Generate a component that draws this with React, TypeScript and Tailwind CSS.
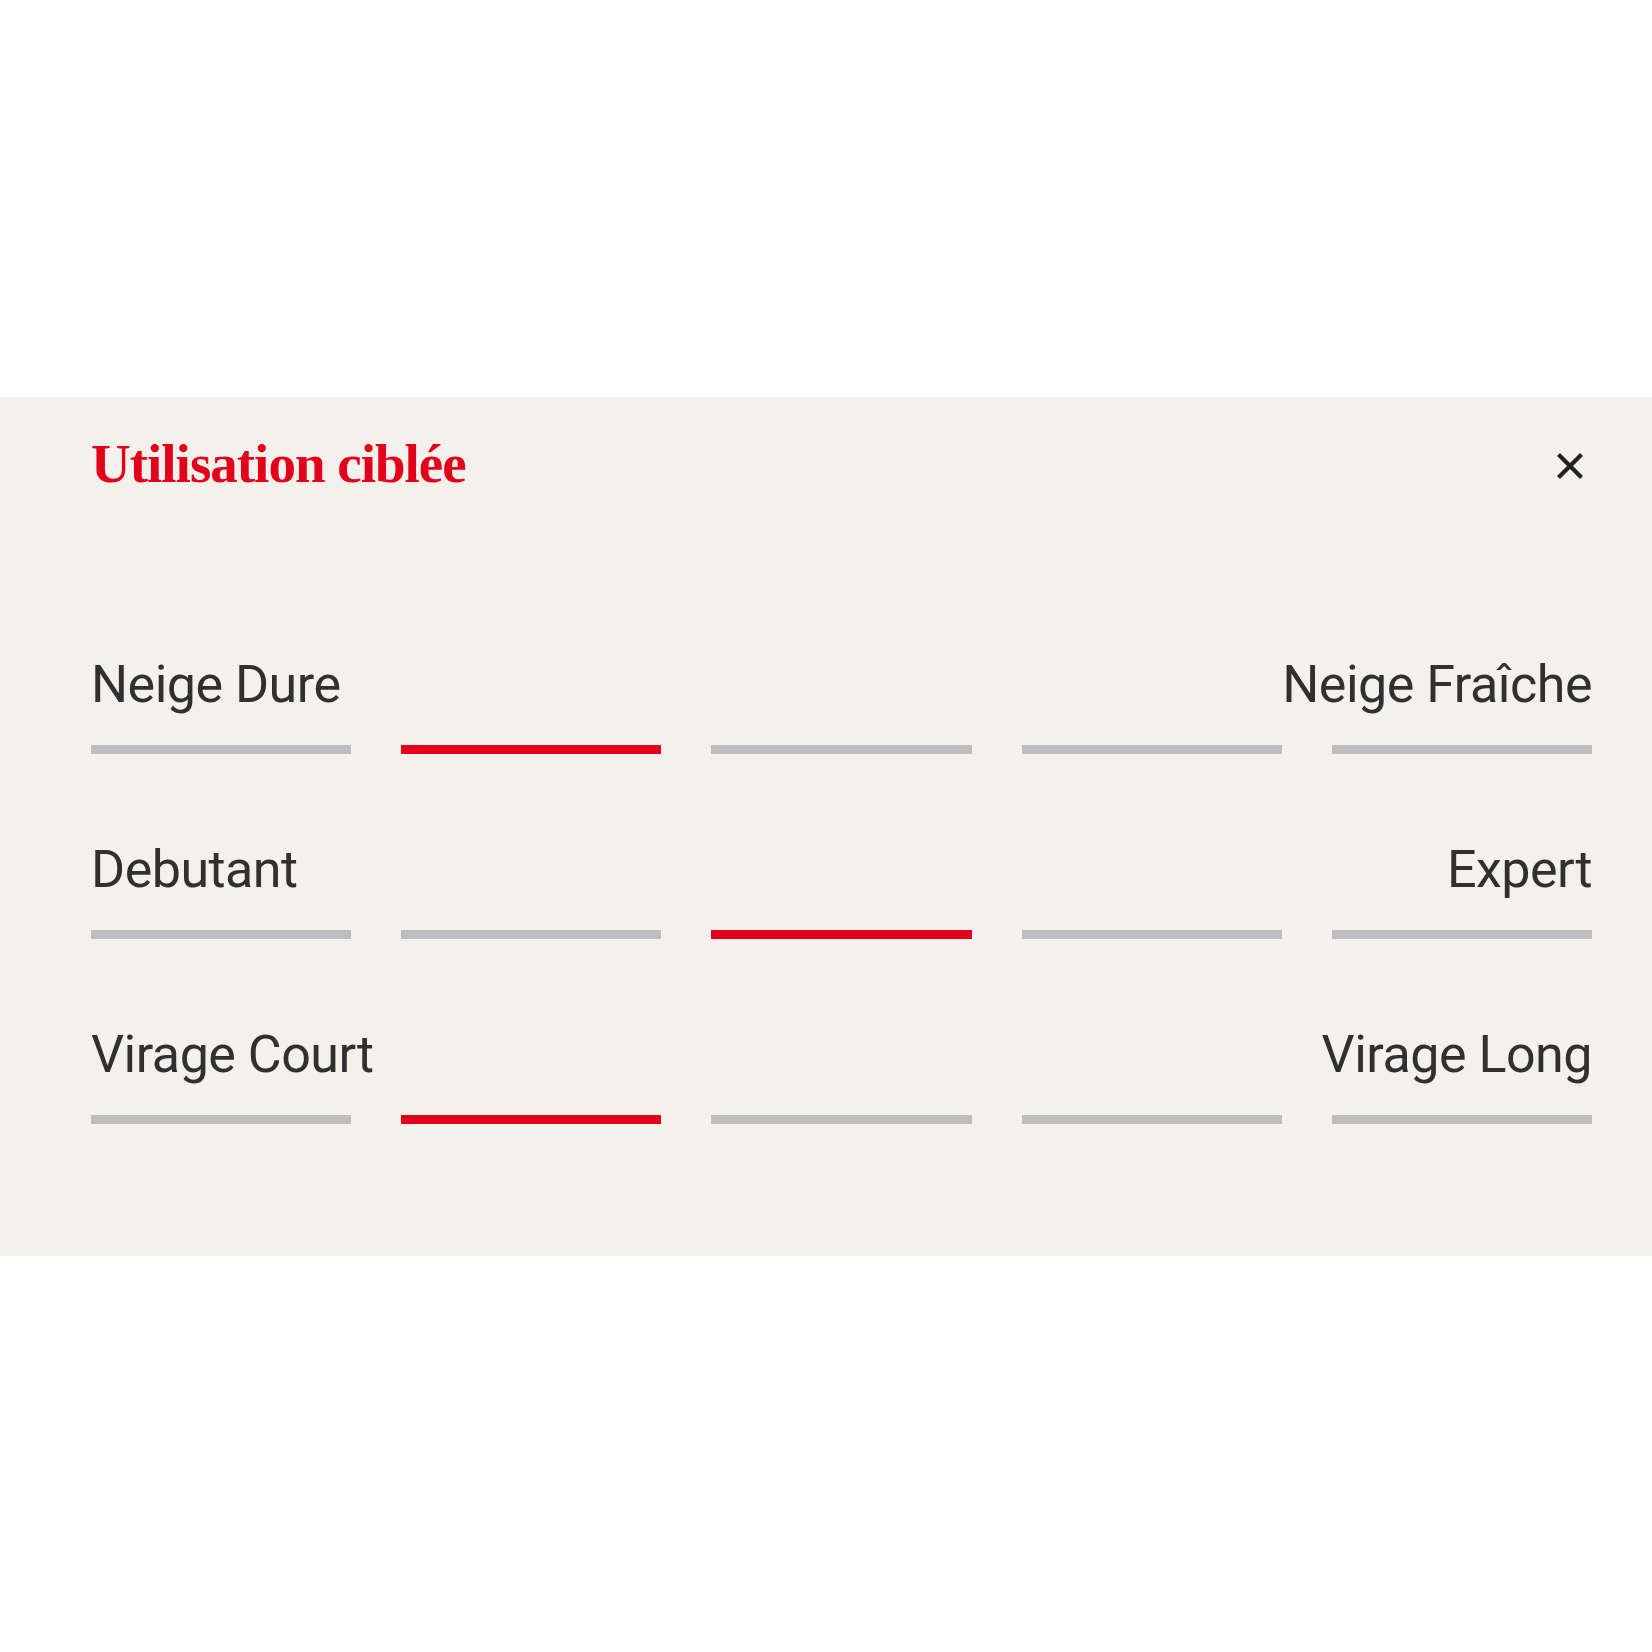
import React from 'react';

interface UsageRow {
  left: string;
  right: string;
  active: number;
}

const rows: UsageRow[] = [
  { left: 'Neige Dure', right: 'Neige Fraîche', active: 1 },
  { left: 'Debutant', right: 'Expert', active: 2 },
  { left: 'Virage Court', right: 'Virage Long', active: 1 },
];

function CloseIcon() {
  return (
    <svg width="30" height="30" viewBox="0 0 30 30" fill="none">
      <path d="M3.5 3.5L26.5 26.5M26.5 3.5L3.5 26.5" stroke="#222222" strokeWidth="4.2" />
    </svg>
  );
}

export default function App() {
  return (
    <div className="min-h-screen bg-white pt-[397px]">
      <section className="bg-[#f4f1ec] pl-[91px] pr-[60px] pt-[39px] pb-[132px]">
        {/* Header */}
        <div className="flex items-center justify-between">
          <h2 className="font-['Liberation_Serif',serif] text-[55px] font-bold leading-[55px] tracking-[-1px] text-[#e2001a]">
            Utilisation ciblée
          </h2>
          <button className="flex h-[44px] w-[44px] items-center justify-center mt-[5px]" title="Fermer">
            <CloseIcon />
          </button>
        </div>

        {/* Sliders */}
        <div className="mt-[168px] flex flex-col gap-[90px]">
          {rows.map((row) => (
            <div key={row.left} className="flex flex-col gap-[34px]">
              <div className="flex justify-between font-['Roboto',sans-serif] text-[52px] leading-[52px] tracking-[-0.5px] text-[#303030]">
                <span>{row.left}</span>
                <span>{row.right}</span>
              </div>
              <div className="grid grid-cols-5 gap-[50px]">
                {[0, 1, 2, 3, 4].map((i) => (
                  <div
                    key={i}
                    className={`h-[9px] ${i === row.active ? 'bg-[#e2001a]' : 'bg-[#bdbdbd]'}`}
                  />
                ))}
              </div>
            </div>
          ))}
        </div>
      </section>
    </div>
  );
}
